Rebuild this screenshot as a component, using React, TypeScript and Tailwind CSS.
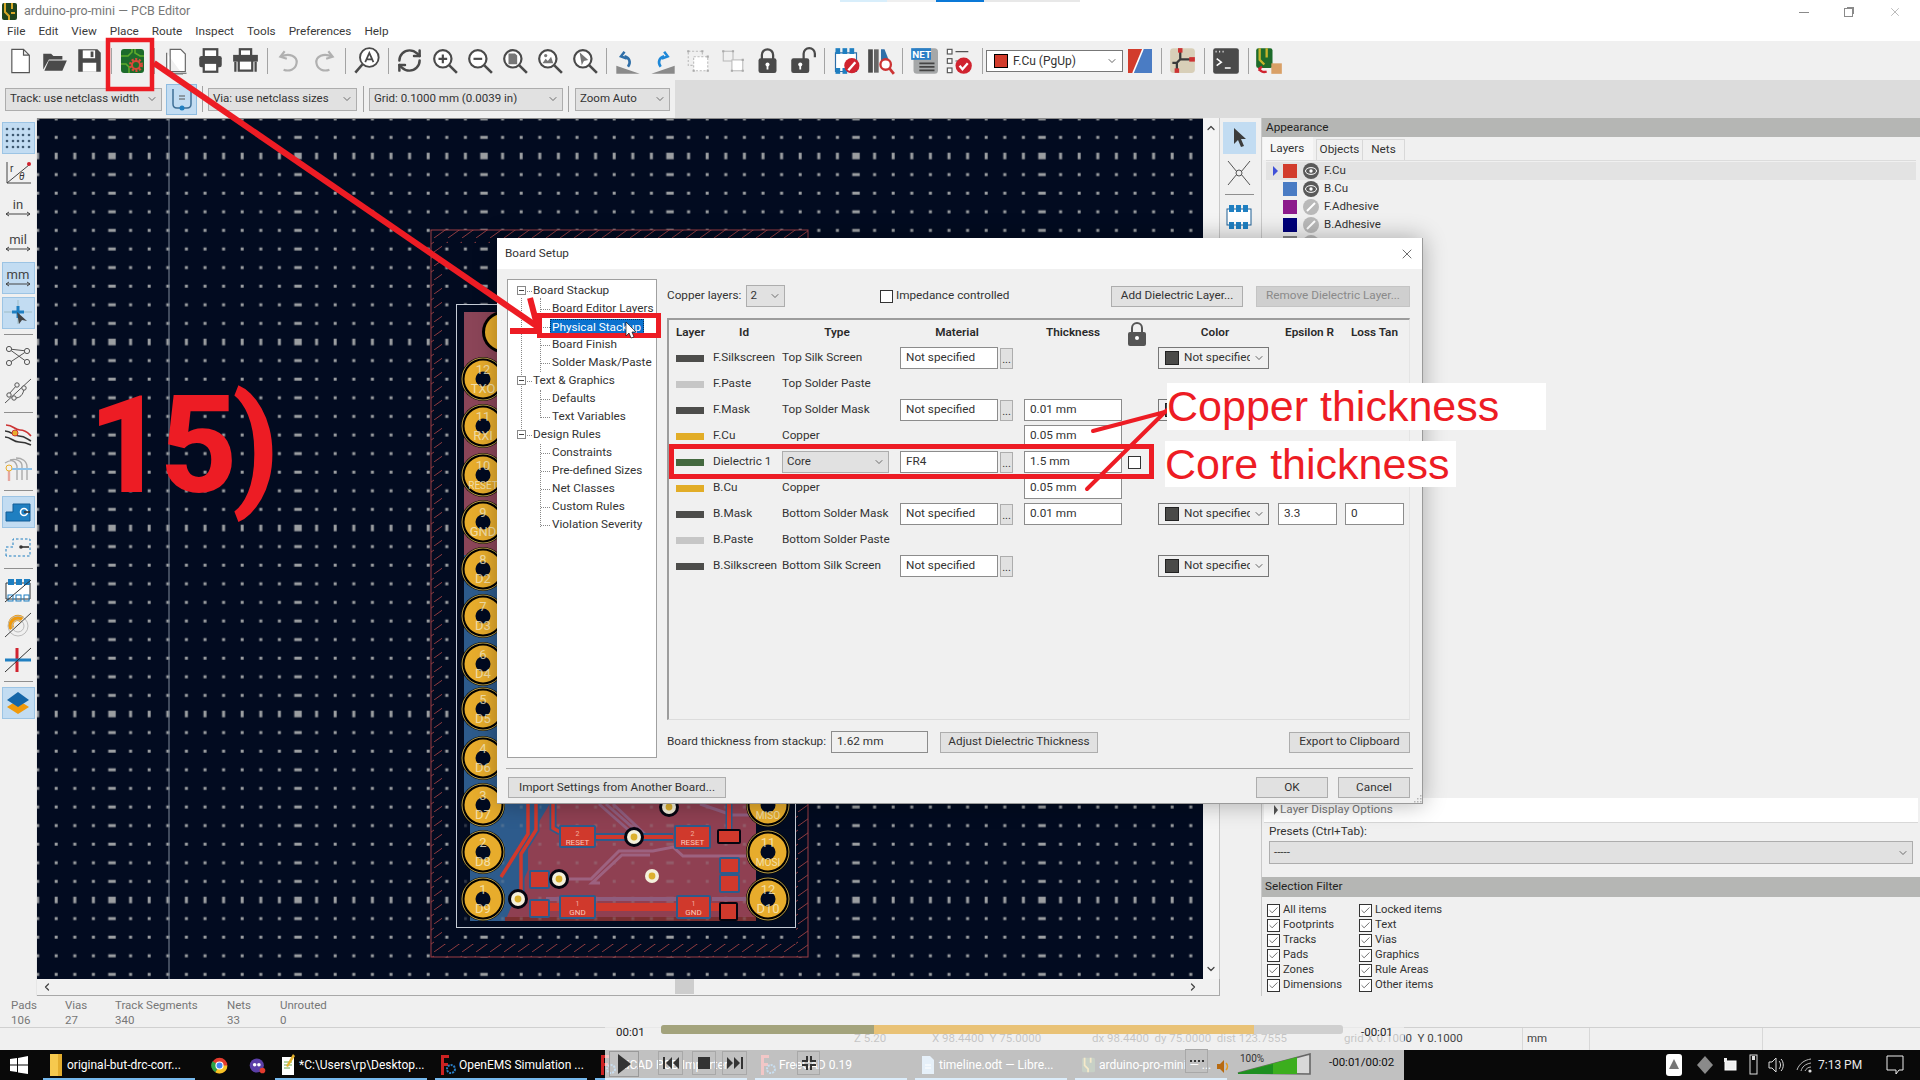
import React from "react";
import { ChevronDown, RefreshCw, X, ChevronUp, ChevronLeft, ChevronRight, Check } from "lucide-react";

const D = "#4a4a4a";
const Svg = ({ s = 24, children }: { s?: number; children: React.ReactNode }) => (
  <svg width={s} height={s} viewBox="0 0 24 24" fill="none">{children}</svg>
);

const Glass = ({ children }: { children?: React.ReactNode }) => (
  <Svg s={26}>
    <circle cx="10" cy="10" r="8" stroke={D} strokeWidth="2" fill="#fff" />
    <path d="M16 16l7 7" stroke={D} strokeWidth="2.4" />
    {children}
  </Svg>
);

const NewDoc = () => <Svg s={28}><path d="M5 2h10l5 5v15H5zM15 2v5h5" fill="#fff" stroke="#555" strokeWidth="1" /></Svg>;
const OpenIcon = () => <Svg s={27}><path d="M2 6h7l2 2h8v3H7l-5 9z" fill={D} /><path d="M7 12h16l-4 9H3z" fill={D} /></Svg>;
const SaveIcon = () => <Svg s={27}><path d="M2 2h17l3 3v17H2z" fill={D} /><rect x="6" y="3" width="11" height="7" fill="#fff" /><rect x="13" y="4" width="2.5" height="5" fill={D} /><rect x="6" y="14" width="12" height="8" fill="#fff" /></Svg>;
const SetupIcon = () => (
  <svg width="23" height="24" viewBox="0 0 23 24">
    <rect width="23" height="24" rx="3" fill="#1d6b2b" />
    <path d="M0 7h7l4-4V0M0 15h5l3 3v6M14 0v4l5 3h4" stroke="#5eaa2c" strokeWidth="1.6" fill="none" />
    <circle cx="15" cy="16" r="5.5" fill="none" stroke="#d84a3a" strokeWidth="3" strokeDasharray="2 1.5" />
    <circle cx="15" cy="16" r="4" fill="none" stroke="#d84a3a" strokeWidth="2" />
  </svg>
);
const PlotIcon = () => <Svg s={28}><path d="M7 2h9l4 4v15H7zM4 5v19h14" fill="#fff" stroke="#666" strokeWidth="1" /><path d="M4 22.5h17" stroke="#666" /></Svg>;
const PrintIcon = () => <Svg s={27}><rect x="6" y="2" width="12" height="7" fill="#fff" stroke={D} strokeWidth="2" /><rect x="2" y="8" width="20" height="10" rx="2" fill={D} /><rect x="6" y="14" width="12" height="8" fill="#fff" stroke={D} strokeWidth="2" /></Svg>;
const Plot2Icon = () => <Svg s={27}><rect x="7" y="2" width="10" height="8" fill="#fff" stroke={D} strokeWidth="2" /><rect x="1" y="7" width="22" height="6" fill={D} /><rect x="6" y="12" width="12" height="9" fill="#fff" stroke={D} strokeWidth="2" /><path d="M3 13v9M21 13v9" stroke={D} strokeWidth="2" /></Svg>;
const UndoIcon = () => <Svg s={26}><path d="M8 3L4 8l6 2M5 8c7-4 15 0 14 6-1 6-7 8-12 6" stroke="#b0b0b0" strokeWidth="2" fill="none" /></Svg>;
const RedoIcon = () => <Svg s={26}><path d="M16 3l4 5-6 2M19 8c-7-4-15 0-14 6 1 6 7 8 12 6" stroke="#b0b0b0" strokeWidth="2" fill="none" /></Svg>;
const FindIcon = () => <Svg s={28}><circle cx="14" cy="9" r="8" stroke={D} strokeWidth="1.6" fill="#fff" /><path d="M8 15l-6 7" stroke={D} strokeWidth="2.2" /><path d="M10.5 13l3.5-8 3.5 8M11.7 10.5h4.6" stroke={D} strokeWidth="1.5" /></Svg>;
const ZIn = () => <Glass><path d="M6 10h8M10 6v8" stroke={D} strokeWidth="2" /></Glass>;
const ZOut = () => <Glass><path d="M6 10h8" stroke={D} strokeWidth="2" /></Glass>;
const ZFit = () => <Glass><path d="M6 5h6l2 2v8H6z" fill="#777" /></Glass>;
const ZObj = () => <Glass><path d="M5 14l3-4 2 2 3-4 2 6z" fill="#777" /><circle cx="8" cy="7" r="1.5" fill="#777" /></Glass>;
const ZSel = () => <Glass><path d="M7 4l8 7-4 1-2 4z" fill="#777" /></Glass>;
const FlipL = () => <Svg s={28}><path d="M2 23l20-7v7z" fill="#8a8a8a" transform="matrix(-1 0 0 1 24 0)" /><path d="M12 17c3-4 1-8-3-9M9 4L6 8l5 2" stroke="#2f6fa8" strokeWidth="2.2" fill="none" /></Svg>;
const FlipR = () => <Svg s={28}><path d="M2 23l20-7v7z" fill="#8a8a8a" /><path d="M10 17c-3-4-1-8 3-9M13 4l3 4-5 2" stroke="#1e88d8" strokeWidth="2.2" fill="none" /></Svg>;
const GroupIcon = () => <Svg s={26}><rect x="3" y="3" width="13" height="13" fill="none" stroke="#bbb" strokeDasharray="2 1.5" /><rect x="8" y="8" width="13" height="13" fill="#fff" stroke="#bbb" strokeDasharray="2 1.5" /><path d="M2 2h2v2H2zM15 2h2v2h-2zM20 7h2v2h-2zM20 20h2v2h-2zM7 20h2v2H7z" fill="#aaa" /></Svg>;
const UngroupIcon = () => <Svg s={26}><rect x="3" y="3" width="9" height="9" fill="none" stroke="#bbb" /><rect x="11" y="11" width="10" height="10" fill="#fff" stroke="#bbb" /><path d="M2 2h2v2H2zM11 2h2v2h-2zM20 10h2v2h-2zM20 20h2v2h-2zM10 20h2v2h-2z" fill="#aaa" /></Svg>;
const LockIcon = () => <Svg s={27}><path d="M7 11V7a5 5 0 0110 0v4" stroke={D} strokeWidth="2" fill="none" /><rect x="4" y="10" width="16" height="13" rx="2" fill={D} /><circle cx="12" cy="15.5" r="1.8" fill="#fff" /><rect x="11.2" y="16" width="1.6" height="4" fill="#fff" /></Svg>;
const UnlockIcon = () => <Svg s={27}><path d="M13 11V6a5 5 0 0110 0v3" stroke={D} strokeWidth="2" fill="none" /><rect x="2" y="10" width="16" height="13" rx="2" fill={D} /><circle cx="10" cy="15.5" r="1.8" fill="#fff" /><rect x="9.2" y="16" width="1.6" height="4" fill="#fff" /></Svg>;
const FpEdit = () => <Svg s={28}><path d="M3 5h18v16H3z" fill="#fff" stroke="#2f6fa8" strokeWidth="1" /><rect x="3" y="1" width="4" height="5" fill="#1f7fc1" /><rect x="9" y="1" width="4" height="5" fill="#1f7fc1" /><rect x="15" y="1" width="4" height="5" fill="#1f7fc1" /><rect x="3" y="18" width="4" height="5" fill="#1f7fc1" /><rect x="9" y="18" width="4" height="5" fill="#1f7fc1" /><circle cx="17" cy="16" r="6.5" fill="#d0232f" /><path d="M14 20l6-7" stroke="#fff" strokeWidth="2" /></Svg>;
const FpBrowse = () => <Svg s={28}><rect x="1" y="2" width="4" height="20" fill={D} /><rect x="6" y="2" width="4" height="20" fill="#666" /><path d="M12 2h3l4 10h-7z" fill="#2f6fa8" /><circle cx="16" cy="15" r="4.5" fill="#fff" stroke="#c33" strokeWidth="2" /><path d="M19 18l4 5" stroke="#c33" strokeWidth="2.4" /></Svg>;
const NetIcon = () => (
  <Svg s={28}>
    <rect x="3" y="1" width="21" height="22" rx="3" fill="#a5a7a8" />
    <rect x="1" y="1" width="17" height="10" fill="#2a7fc6" />
    <text x="2" y="9.5" fontSize="8.5" fontWeight="700" fill="#fff" fontFamily="Roboto">NET</text>
    <path d="M8 14h13M8 17h13M8 20h13" stroke="#444" strokeWidth="1.5" />
  </Svg>
);
const DrcIcon = () => <Svg s={28}><rect x="2" y="2" width="4" height="4" fill="#fff" stroke="#555" /><rect x="2" y="10" width="4" height="4" fill="#fff" stroke="#555" /><rect x="2" y="18" width="4" height="4" fill="#fff" stroke="#555" /><path d="M9 4h11M9 12h3" stroke="#555" /><circle cx="16" cy="16" r="7" fill="#d0232f" /><path d="M12.5 16l2.5 3 4.5-5" stroke="#fff" strokeWidth="2" fill="none" /></Svg>;
const RouteIcon = () => <Svg s={27}><rect x="1" y="1" width="22" height="22" rx="3" fill="#d8cfb8" /><path d="M10 4v7l-3 3v7M10 11h10M7 14l-4 0" stroke="#3a3a3a" strokeWidth="2" /><rect x="8" y="1" width="4" height="4" fill="#c33" /><rect x="18" y="9" width="5" height="4" fill="#c33" /><rect x="5" y="19" width="4" height="4" fill="#c33" /></Svg>;
const TermIcon = () => <Svg s={28}><rect x="1" y="1" width="22" height="22" rx="2" fill={D} /><path d="M3 4h1M6 4h1M9 4h1" stroke="#ddd" strokeWidth="1.5" /><path d="M4 10l4 3-4 3M11 18h5" stroke="#fff" strokeWidth="1.3" fill="none" /></Svg>;
const ScriptIcon = () => <Svg s={28}><rect x="1" y="1" width="14" height="17" rx="2" fill="#1d6b2b" /><path d="M4 1v10l4 4M10 1v8" stroke="#c6b42c" strokeWidth="2" /><path d="M4 18c0 3 3 4 6 3M3 19l3-2M3 19l3 2" stroke="#d0232f" strokeWidth="2" fill="none" /><rect x="14" y="14" width="9" height="9" fill="#d9a066" /></Svg>;

const Box = ({ children }: { children?: React.ReactNode }) => (
  <div className="w-[35px] h-[32px] flex items-center justify-center shrink-0">{children}</div>
);
const Sep = () => <div className="w-px h-[26px] bg-[#a3a3a3] ml-[4px] mr-[3px] shrink-0" />;

const Combo = ({ children, className }: { children: React.ReactNode; className: string }) => (
  <div className={"flex items-center justify-between border border-[#adadad] bg-[#e1e1e1] pl-[4px] pr-[3px] text-[#333] text-[11.5px] whitespace-nowrap " + className}>
    <span>{children}</span>
    <ChevronDown size={12} strokeWidth={1.5} className="text-[#444] shrink-0" />
  </div>
);

const TitleBar = () => (
  <div className="h-[22px] bg-white flex items-center relative shrink-0">
    <svg className="ml-[2px]" width="15" height="17" viewBox="0 0 15 17"><rect width="15" height="17" rx="2" fill="#20451e" /><path d="M3 0v9l4 4v4M10 0v6M13 10H9" stroke="#d7a92a" strokeWidth="2" fill="none" /></svg>
    <span className="ml-[7px] text-[12.5px] text-[#777]">arduino-pro-mini — PCB Editor</span>
    <div className="absolute left-[840px] top-0 flex h-[2px]">
      <div className="w-[47px] bg-[#d8eefb]" />
      <div className="w-[49px] bg-[#efefef]" />
      <div className="w-[48px] bg-[#0a78d7]" />
      <div className="w-[96px] bg-[#e8e8e8]" />
    </div>
    <div className="absolute right-[18px] top-[5px] flex items-center gap-[35px] text-[#8a8a8a]">
      <div className="w-[10px] h-px bg-[#8a8a8a]" />
      <div className="w-[9px] h-[9px] border border-[#8a8a8a] shadow-[2px_-2px_0_-1px_#8a8a8a]" />
      <X size={14} strokeWidth={1} />
    </div>
  </div>
);

const MenuBar = () => (
  <div className="h-[19px] bg-white flex items-center pl-[7px] gap-[13px] text-[11.75px] text-[#3a3a3a] shrink-0">
    {["File", "Edit", "View", "Place", "Route", "Inspect", "Tools", "Preferences", "Help"].map((m) => <span key={m}>{m}</span>)}
  </div>
);

const Toolbar1 = () => (
  <div className="h-[39px] bg-[#f0f0f0] flex items-center pl-[2px] shrink-0">
    <Box><NewDoc /></Box><Box><OpenIcon /></Box><Box><SaveIcon /></Box><Sep />
    <Box><SetupIcon /></Box><Sep />
    <Box><PlotIcon /></Box><Box><PrintIcon /></Box><Box><Plot2Icon /></Box><Sep />
    <Box><UndoIcon /></Box><Box><RedoIcon /></Box><Sep />
    <Box><FindIcon /></Box><Sep />
    <Box><RefreshCw size={27} strokeWidth={2.2} color={D} /></Box><Box><ZIn /></Box><Box><ZOut /></Box><Box><ZFit /></Box><Box><ZObj /></Box><Box><ZSel /></Box><Sep />
    <Box><FlipL /></Box><Box><FlipR /></Box><Box><GroupIcon /></Box><Box><UngroupIcon /></Box><Box><LockIcon /></Box><Box><UnlockIcon /></Box><Sep />
    <Box><FpEdit /></Box><Box><FpBrowse /></Box><Sep />
    <Box><NetIcon /></Box><Box><DrcIcon /></Box>
    <div className="w-px h-[26px] bg-[#a3a3a3] ml-[6px] mr-[3px] shrink-0" />
    <div className="w-[137px] h-[22px] border border-[#777] bg-white flex items-center pl-[7px] pr-[4px] text-[12px] text-[#333] shrink-0">
      <span className="w-[14px] h-[14px] bg-[#d23c2c] border border-black mr-[5px]" />
      <span className="flex-1">F.Cu (PgUp)</span>
      <ChevronDown size={12} strokeWidth={1.5} />
    </div>
    <svg className="ml-[5px] shrink-0" width="24" height="24" viewBox="0 0 24 24"><rect width="24" height="24" fill="#4a7cc4" /><path d="M0 0h15L5 24H0z" fill="#d23c2c" /><path d="M15 0L5 24" stroke="#fff" strokeWidth="1.6" /></svg>
    <div className="w-px h-[26px] bg-[#a3a3a3] ml-[9px] mr-[3px] shrink-0" />
    <Box><RouteIcon /></Box>
    <div className="w-px h-[26px] bg-[#a3a3a3] ml-[4px] mr-[3px] shrink-0" />
    <Box><TermIcon /></Box>
    <div className="w-px h-[26px] bg-[#a3a3a3] ml-[5px] mr-[2px] shrink-0" />
    <Box><ScriptIcon /></Box>
  </div>
);

const Toolbar2 = () => (
  <div className="h-[38px] bg-[#dcdcdc] flex shrink-0">
    <div className="w-[675px] bg-[#f0f0f0] flex items-center pl-[5px]">
      <Combo className="w-[157px] h-[23px]">Track: use netclass width</Combo>
      <div className="ml-[4px] w-[31px] h-[31px] bg-[#c2dcf2] border border-[#8fbce0] flex items-center justify-center">
        <svg width="22" height="26" viewBox="0 0 22 26"><path d="M2 3v15c0 3 2 4 4 4h10c2 0 4-1 4-4V3" stroke="#3f6f96" strokeWidth="1.5" fill="none" /><path d="M8 10h6M8 13h6" stroke="#555" /><circle cx="11" cy="22" r="2.5" fill="#1f7fc1" /></svg>
      </div>
      <div className="w-px h-[26px] bg-[#a3a3a3] ml-[5px] mr-[5px]" />
      <Combo className="w-[149px] h-[23px]">Via: use netclass sizes</Combo>
      <div className="w-px h-[26px] bg-[#a3a3a3] ml-[6px] mr-[5px]" />
      <Combo className="w-[194px] h-[23px]">Grid: 0.1000 mm (0.0039 in)</Combo>
      <div className="w-px h-[26px] bg-[#a3a3a3] ml-[5px] mr-[6px]" />
      <Combo className="w-[95px] h-[23px]">Zoom Auto</Combo>
    </div>
  </div>
);

const Tool = ({ on, children }: { on?: boolean; children: React.ReactNode }) => (
  <div className="h-[35px] flex items-center justify-center">
    <div className={on ? "w-[33px] h-[32px] bg-[#c2dcf2] border border-[#9cc4e4] flex items-center justify-center" : "w-[33px] h-[32px] flex items-center justify-center"}>{children}</div>
  </div>
);
const HSep = () => <div className="h-px w-[29px] bg-[#8f8f8f] mx-auto mt-[4px] mb-[3px]" />;
const Unit = ({ t }: { t: string }) => (
  <svg width="28" height="26" viewBox="0 0 28 26"><text x="14" y="14" textAnchor="middle" fontSize="13" fill="#444" fontFamily="Roboto">{t}</text><path d="M2 19h24M2 19l3-2M2 19l3 2M26 19l-3-2M26 19l-3 2" stroke="#444" /></svg>
);

const LeftBar = () => (
  <div className="w-[37px] bg-[#f0f0f0] pt-[2px] shrink-0 border-r border-[#e6e6e6]">
    <Tool on><svg width="26" height="24" viewBox="0 0 26 24">{[3, 9, 15, 21].map((y) => [2, 8, 13, 18, 24].map((x) => <circle key={x + "-" + y} cx={x} cy={y} r="1.3" fill="#3f5a72" />))}</svg></Tool>
    <Tool><svg width="28" height="26" viewBox="0 0 28 26"><path d="M3 2v21h24M3 23L25 5" stroke="#444" fill="none" /><circle cx="25" cy="4" r="2" fill="#d0232f" /><text x="6" y="12" fontSize="10" fill="#333" fontFamily="Roboto">r</text><text x="15" y="20" fontSize="10" fontStyle="italic" fill="#333" fontFamily="Roboto">θ</text></svg></Tool>
    <Tool><Unit t="in" /></Tool>
    <Tool><Unit t="mil" /></Tool>
    <Tool on><Unit t="mm" /></Tool>
    <Tool on><svg width="28" height="26" viewBox="0 0 28 26"><path d="M0 12h28M14 0v24" stroke="#8aa" strokeWidth=".6" /><path d="M8 12h12M14 6v12" stroke="#1f7fc1" strokeWidth="3" /><path d="M13 12l2 12 3-4 5 1z" fill="#444" /></svg></Tool>
    <HSep />
    <Tool><svg width="28" height="24" viewBox="0 0 28 24"><path d="M5 5l18 13M5 19L23 7M5 5l18 2" stroke="#555" /><circle cx="5" cy="5" r="2.6" fill="#f0f0f0" stroke="#555" /><circle cx="5" cy="19" r="2.6" fill="#f0f0f0" stroke="#555" /><circle cx="23" cy="7" r="2.6" fill="#f0f0f0" stroke="#555" /><circle cx="23" cy="18" r="2.6" fill="#f0f0f0" stroke="#555" /></svg></Tool>
    <Tool><svg width="28" height="26" viewBox="0 0 28 26"><path d="M1 25L27 1" stroke="#555" /><path d="M5 16l8-9M11 20c5 0 8-3 9-9" stroke="#555" fill="none" /><circle cx="5" cy="17" r="2.2" fill="#f0f0f0" stroke="#555" /><circle cx="13" cy="7" r="2.2" fill="#f0f0f0" stroke="#555" /><circle cx="10" cy="20" r="2.2" fill="#f0f0f0" stroke="#555" /><circle cx="20" cy="10" r="2.2" fill="#f0f0f0" stroke="#555" /></svg></Tool>
    <HSep />
    <Tool><svg width="28" height="24" viewBox="0 0 28 24"><path d="M2 3c8 0 8 5 14 5s8 3 11 6" stroke="#c33" strokeWidth="1.6" fill="none" /><path d="M1 9c7 0 8 5 14 5s8 3 12 5" stroke="#333" strokeWidth="1.6" fill="none" /><path d="M1 15c6 0 8 5 14 5s8 1 12 3" stroke="#333" strokeWidth="1.6" fill="none" /><circle cx="11" cy="11" r="3" fill="#e8ad2b" stroke="#c33" /></svg></Tool>
    <Tool><svg width="28" height="24" viewBox="0 0 28 24"><path d="M1 6c6-4 10-3 12 3v14M6 3c6-2 12 1 12 6v14M12 1c6 0 11 3 11 9v13" stroke="#aaa" strokeWidth="1.4" fill="none" /><path d="M5 14v10" stroke="#e5a79f" strokeWidth="2.4" /><circle cx="5" cy="11" r="3" fill="none" stroke="#e8ad2b" /><path d="M8 12h20" stroke="#8cc0e8" strokeWidth="2" /></svg></Tool>
    <HSep />
    <Tool on><svg width="28" height="24" viewBox="0 0 28 24"><path d="M2 21V12h7V4h17v17z" fill="#1f7fc1" stroke="#135d96" /><circle cx="20" cy="12" r="3.5" fill="none" stroke="#fff" strokeWidth="1.6" /><path d="M20 12h6" stroke="#333" strokeWidth="1.6" /></svg></Tool>
    <Tool><svg width="28" height="24" viewBox="0 0 28 24"><path d="M2 21V12h7V4h17v17z" fill="none" stroke="#1f7fc1" strokeDasharray="2.5 2" /><path d="M17 12h8" stroke="#333" strokeWidth="1.6" /><circle cx="17" cy="12" r="1.8" fill="#333" /></svg></Tool>
    <HSep />
    <Tool><svg width="28" height="26" viewBox="0 0 28 26"><path d="M2 6h24v16H2z" fill="#fff" stroke="#333" /><rect x="4" y="2" width="6" height="6" fill="#1f7fc1" /><rect x="12" y="2" width="6" height="6" fill="#1f7fc1" /><rect x="20" y="2" width="6" height="6" fill="#1f7fc1" /><rect x="4" y="18" width="5" height="6" fill="none" stroke="#1f7fc1" /><rect x="12" y="18" width="5" height="6" fill="none" stroke="#1f7fc1" /><rect x="20" y="18" width="5" height="6" fill="none" stroke="#1f7fc1" /><path d="M1 25L27 3" stroke="#333" /></svg></Tool>
    <Tool><svg width="28" height="26" viewBox="0 0 28 26"><path d="M4 14a10 10 0 0116-9l-4 5a4 4 0 00-6 5l-4 3a10 10 0 01-2-4z" fill="#f09a0c" /><circle cx="14" cy="14" r="10" fill="none" stroke="#bbb" /><circle cx="14" cy="14" r="6" fill="none" stroke="#bbb" /><path d="M1 25L27 1" stroke="#444" /></svg></Tool>
    <Tool><svg width="28" height="26" viewBox="0 0 28 26"><path d="M13 1v24" stroke="#d0232f" strokeWidth="3" /><path d="M1 13h26" stroke="#1f7fc1" strokeWidth="3" /><path d="M1 25L27 1" stroke="#333" /></svg></Tool>
    <HSep />
    <Tool on><svg width="26" height="24" viewBox="0 0 26 24"><path d="M13 9L2 16l11 7 11-7z" fill="#f09a0c" /><path d="M13 1L2 9l11 7 11-7z" fill="#1566a8" /></svg></Tool>
  </div>
);

const pins: [number, string, string][] = [
  [379, "12", "TXO"], [426, "11", "RXI"], [475, "10", "RESET"], [522, "9", "GND"], [569, "8", "D2"], [616, "7", "D3"],
  [664, "6", "D4"], [709, "5", "D5"], [758, "4", "D6"], [805, "3", "D7"], [852, "2", "D8"], [899, "1", "D9"],
];
const Pad = ({ x, y, n, l }: { x: number; y: number; n: string; l: string }) => (
  <g fontFamily="Roboto" textAnchor="middle">
    <circle cx={x} cy={y} r="22" fill="#000" />
    <circle cx={x} cy={y} r="21" fill="none" stroke="#e8c65a" strokeWidth=".8" />
    <circle cx={x} cy={y} r="18.5" fill="#e7ac2c" />
    <circle cx={x} cy={y} r="7.5" fill="#010a20" />
    <text x={x} y={y - 5} fontSize="13" fill="#f6ebc5" opacity=".8">{n}</text>
    <text x={x} y={y + 14} fontSize={l.length > 3 ? 10 : 13} fill="#f6ebc5" opacity=".8">{l}</text>
  </g>
);
const Via = ({ x, y, halo = true }: { x: number; y: number; halo?: boolean }) => (
  <g>{halo && <circle cx={x} cy={y} r="10" fill="#050510" />}<circle cx={x} cy={y} r="7" fill="#f4f0dc" /><circle cx={x} cy={y} r="3.4" fill="#dcb02e" /></g>
);
const Smd = ({ x, y, w, h, t, n }: { x: number; y: number; w: number; h: number; t?: string; n?: string }) => (
  <g>
    <rect x={x - 2} y={y - 2} width={w + 4} height={h + 4} rx="2" fill="#2d5b8c" />
    <rect x={x} y={y} width={w} height={h} fill="#d0392c" />
    {t && <><text x={x + w / 2} y={y + h / 2 - 1} textAnchor="middle" fontSize="7" fill="#f0b0a0" fontFamily="Roboto">{n}</text><text x={x + w / 2} y={y + h / 2 + 8} textAnchor="middle" fontSize="8" fill="#f6c9bc" fontFamily="Roboto">{t}</text></>}
  </g>
);

const Canvas = () => (
  <div className="flex-1 relative bg-[#020b20] overflow-hidden border-t border-[#8a8a8a]">
    <svg className="absolute inset-0 w-full h-full">
      <defs>
        <pattern id="dots" patternUnits="userSpaceOnUse" x="102.7" y="146.7" width="186" height="186">
          {Array.from({ length: 10 }).map((_, i) => Array.from({ length: 10 }).map((_, j) => {
            const w = i === 0 ? 7.5 : 3;
            const h = j === 0 ? 6.5 : 3;
            return <rect key={i + "-" + j} x={9.3 + i * 18.6 - w / 2} y={9.3 + j * 18.6 - h / 2} width={w} height={h} fill="#9b9ea1" />;
          }))}
        </pattern>
        <pattern id="hatch" patternUnits="userSpaceOnUse" width="14" height="14">
          <path d="M0 14L14 4" stroke="#8d3a3e" strokeWidth="1" />
        </pattern>
      </defs>
      <g transform="translate(-37 -119)">
        <rect x="37" y="119" width="1170" height="870" fill="url(#dots)" />
        <path d="M169 119v870" stroke="#7f8a99" strokeWidth="1" />
        <rect x="431" y="230" width="377" height="13" fill="#020b20" />
        <rect x="431" y="230" width="377" height="13" fill="url(#hatch)" />
        <rect x="431" y="230" width="11" height="727" fill="#020b20" />
        <rect x="431" y="230" width="11" height="727" fill="url(#hatch)" />
        <rect x="796" y="230" width="12" height="727" fill="#020b20" />
        <rect x="796" y="230" width="12" height="727" fill="url(#hatch)" />
        <rect x="431" y="944" width="377" height="13" fill="#020b20" />
        <rect x="431" y="944" width="377" height="13" fill="url(#hatch)" />
        <rect x="431" y="230" width="377" height="727" fill="none" stroke="#9c3f44" strokeWidth="1" />
        <rect x="456.5" y="304.5" width="339" height="623" fill="#020b20" stroke="#c5ccd6" strokeWidth="1" />
        <rect x="464" y="312" width="60" height="243" fill="#8b4558" />
        <rect x="464" y="555" width="60" height="265" fill="#2d5b8c" />
        <path d="M464 800H790V921H464z" fill="#020b20" />
        <path d="M470 800H560V830L528 870V921H470z" fill="#2d5b8c" />
        <path d="M552 800H756V921H505L528 870V840z" fill="#8f4052" />
        <rect x="505" y="917" width="251" height="4" fill="#7a2f30" />
        <rect x="464" y="800" width="292" height="121" fill="url(#dots)" opacity=".3" />
        <path d="M528 804V834L501 877M536 804V830L521 854V900M553 804V828L560 832" stroke="#2d5b8c" strokeWidth="7" fill="none" />
        <path d="M528 804V834L501 877M536 804V830L521 854V900M553 804V828L560 832" stroke="#d0392c" strokeWidth="3.5" fill="none" />
        <path d="M599 804L633 834M606 804L640 834M613 804L648 837M700 804L732 815M730 815H760" stroke="#8f5d7e" strokeWidth="3" fill="none" />
        <path d="M568 879H591L619 851H653L673 847L683 856H746M600 883H592L622 855H650" stroke="#9d6280" strokeWidth="3" fill="none" />
        <path d="M546 899H676M712 899H746" stroke="#8f5d7e" strokeWidth="4" fill="none" />
        <path d="M596 837H673" stroke="#2d5b8c" strokeWidth="8" />
        <path d="M596 837H673" stroke="#d0392c" strokeWidth="4" />
        <path d="M729 804V832" stroke="#2d5b8c" strokeWidth="7" />
        <path d="M729 804V832" stroke="#d0392c" strokeWidth="4" />
        <rect x="546" y="903" width="183" height="8" fill="#d0392c" />
        <Smd x={561} y={827} w={33} h={19} t="RESET" n="2" />
        <Smd x={676} y={827} w={33} h={20} t="RESET" n="2" />
        <Smd x={561} y={897} w={33} h={20} t="GND" n="1" />
        <Smd x={678} y={897} w={31} h={20} t="GND" n="1" />
        <rect x="717" y="829" width="24" height="15" rx="2" fill="#050510" />
        <rect x="719" y="831" width="20" height="11" fill="#d0392c" />
        <rect x="726" y="870" width="7" height="8" fill="#d0392c" />
        <Smd x={721} y={859} w={17} h={13} />
        <Smd x={721} y={876} w={17} h={15} />
        <rect x="719" y="902" width="19" height="19" rx="2" fill="#050510" />
        <rect x="721" y="904" width="15" height="15" fill="#d0392c" />
        <Smd x={531} y={872} w={17} h={15} />
        <Smd x={531} y={901} w={17} h={15} />
        <Via x={634} y={837} />
        <Via x={652} y={876} halo={false} />
        <Via x={559} y={879} />
        <Via x={518} y={899} />
        <Via x={669} y={807} />
        <circle cx="503" cy="332" r="21" fill="#000" /><circle cx="503" cy="332" r="18" fill="#e7ac2c" />
        {pins.map(([y, n, l]) => <Pad key={n} x={483} y={y} n={n} l={l} />)}
        <Pad x={768} y={805} n="" l="MISO" />
        <Pad x={768} y={852} n="11" l="MOSI" />
        <Pad x={768} y={899} n="12" l="D10" />
      </g>
    </svg>
  </div>
);

const CenterColumn = () => (
  <div className="w-[1183px] flex flex-col shrink-0">
    <div className="flex-1 flex min-h-0">
      <Canvas />
      <div className="w-[17px] bg-[#f4f4f4] flex flex-col items-center justify-between py-[4px] border-r border-[#c8c8c8]">
        <ChevronUp size={12} strokeWidth={2.5} className="text-[#444]" />
        <ChevronDown size={12} strokeWidth={2.5} className="text-[#444]" />
      </div>
    </div>
    <div className="h-[17px] bg-[#f1f1f1] border-b border-r border-[#a8a8a8] flex items-center justify-between px-[4px] relative shrink-0">
      <ChevronLeft size={12} strokeWidth={2.5} className="text-[#444]" />
      <div className="absolute left-[638px] top-0 w-[19px] h-[15px] bg-[#cdcdcd]" />
      <ChevronRight size={12} strokeWidth={2.5} className="text-[#444] mr-[16px]" />
    </div>
  </div>
);

const RightTools = () => (
  <div className="w-[38px] bg-[#f0f0f0] flex flex-col items-center pt-[4px] shrink-0">
    <div className="w-[33px] h-[32px] bg-[#c2dcf2] flex items-center justify-center"><svg width="16" height="22" viewBox="0 0 16 22"><path d="M3 1v16l4-4 3 7 3-1-3-7h5z" fill="#3c3c3c" /></svg></div>
    <svg className="mt-[5px]" width="26" height="28" viewBox="0 0 26 28"><path d="M2 2l9 11M24 2l-9 11M2 26l9-11M24 26l-9-11" stroke="#555" /><circle cx="13" cy="14" r="3" fill="none" stroke="#555" /></svg>
    <div className="h-px w-[29px] bg-[#8f8f8f] mt-[7px]" />
    <svg className="mt-[9px]" width="26" height="26" viewBox="0 0 26 26"><rect x="1" y="5" width="24" height="16" fill="#fff" stroke="#1c5e94" /><g fill="#1f7fc1"><rect x="3" y="1" width="5" height="7" /><rect x="10" y="1" width="5" height="7" /><rect x="17" y="1" width="5" height="7" /><rect x="3" y="18" width="5" height="7" /><rect x="10" y="18" width="5" height="7" /><rect x="17" y="18" width="5" height="7" /></g></svg>
  </div>
);

const layers: [string, string, boolean, boolean][] = [
  ["F.Cu", "#d23c2c", true, true],
  ["B.Cu", "#4a7cc4", true, false],
  ["F.Adhesive", "#8c1a8c", false, false],
  ["B.Adhesive", "#00007a", false, false],
  ["F.Paste", "#888888", false, false],
];
const Eye = ({ on }: { on: boolean }) => on ? (
  <svg width="16" height="16" viewBox="0 0 16 16"><circle cx="8" cy="8" r="8" fill="#5a5a5a" /><ellipse cx="8" cy="8" rx="5.5" ry="3.4" fill="none" stroke="#fff" /><circle cx="8" cy="8" r="1.7" fill="#fff" /></svg>
) : (
  <svg width="16" height="16" viewBox="0 0 16 16"><circle cx="8" cy="8" r="8" fill="#b9b9b9" /><path d="M4 12l8-8" stroke="#fff" strokeWidth="2" /></svg>
);
const Cb = ({ label }: { label: string }) => (
  <div className="flex items-center h-[15px]">
    <span className="w-[13px] h-[13px] border border-[#333] bg-white flex items-center justify-center shrink-0"><Check size={11} strokeWidth={1.4} color="#222" /></span>
    <span className="ml-[3px] text-[11.25px] text-[#333]">{label}</span>
  </div>
);

const Appearance = () => (
  <div className="flex-1 ml-[3px] flex flex-col bg-[#f0f0f0] border-l border-[#c9c9c9]">
    <div className="h-[19px] bg-[#b5b6b4] pl-[4px] flex items-center text-[11.75px] text-[#222]">Appearance</div>
    <div className="h-[23px] flex items-end pl-[1px] text-[11.75px] text-[#333]">
      <div className="w-[50px] h-[23px] bg-[#f7f7f7] pl-[7px] flex items-center">Layers</div>
      <div className="w-[47px] h-[21px] ml-[3px] border border-[#d8d8d8] border-b-0 flex items-center justify-center">Objects</div>
      <div className="w-[42px] h-[21px] border border-[#d8d8d8] border-b-0 border-l-0 flex items-center justify-center">Nets</div>
    </div>
    <div className="h-[638px] mx-[4px] border-t border-[#dcdcdc] pt-[1px]">
      {layers.map(([n, c, on, sel]) => (
        <div key={n} className={sel ? "h-[18px] bg-[#e3e3e3] flex items-center relative pl-[17px] text-[11.5px] text-[#333]" : "h-[18px] flex items-center relative pl-[17px] text-[11.5px] text-[#333]"}>
          {sel && <span className="absolute left-[7px] top-[4px] w-0 h-0 border-y-[5px] border-y-transparent border-l-[5px] border-l-[#3f50d8]" />}
          <span className="w-[14px] h-[14px] mr-[6px]" style={{ background: c }} />
          <Eye on={on} />
          <span className="ml-[5px]">{n}</span>
        </div>
      ))}
    </div>
    <div className="h-[25px] bg-white mx-[2px] border-b border-[#d8d8d8] flex items-center pl-[10px] text-[11.75px] text-[#777]">
      <span className="w-0 h-0 border-y-[5px] border-y-transparent border-l-[4px] border-l-[#555] mr-[2px]" />Layer Display Options
    </div>
    <div className="h-[18px] pl-[7px] flex items-center text-[11.75px] text-[#333]">Presets (Ctrl+Tab):</div>
    <Combo className="h-[23px] mx-[7px] w-[644px] pl-[4px] pr-[3px]">-----</Combo>
    <div className="h-[13px]" />
    <div className="h-[20px] bg-[#b5b6b4] pl-[3px] flex items-center text-[11.75px] text-[#222]">Selection Filter</div>
    <div className="grid grid-cols-[92px_1fr] pl-[5px] pt-[6px]">
      {[["All items", "Locked items"], ["Footprints", "Text"], ["Tracks", "Vias"], ["Pads", "Graphics"], ["Zones", "Rule Areas"], ["Dimensions", "Other items"]].flat().map((l) => <Cb key={l} label={l} />)}
    </div>
  </div>
);

const Status = () => (
  <div className="h-[54px] bg-[#f0f0f0] flex flex-col shrink-0">
    <div className="h-[31px] flex pl-[11px] pt-[2px] text-[11.5px] leading-[15px] text-[#777]">
      <div className="w-[54px]"><div>Pads</div><div>106</div></div>
      <div className="w-[50px]"><div>Vias</div><div>27</div></div>
      <div className="w-[112px]"><div>Track Segments</div><div>340</div></div>
      <div className="w-[53px]"><div>Nets</div><div>33</div></div>
      <div><div>Unrouted</div><div>0</div></div>
    </div>
    <div className="flex-1 border-t border-[#d0d0d0] flex items-center relative text-[11.5px] text-[#444]">
      <span className="absolute left-[854px]">Z 5.20</span>
      <span className="absolute left-[932px]">X 98.4400&nbsp; Y 75.0000</span>
      <span className="absolute left-[1092px]">dx 98.4400&nbsp; dy 75.0000&nbsp; dist 123.7555</span>
      <span className="absolute left-[1344px]">grid X 0.1000&nbsp; Y 0.1000</span>
      <span className="absolute left-[1527px]">mm</span>
      <div className="absolute left-[1522px] top-0 h-full w-px bg-[#d8d8d8]" />
      <div className="absolute left-[1589px] top-0 h-full w-px bg-[#d8d8d8]" />
      <div className="absolute left-[1762px] top-0 h-full w-px bg-[#d8d8d8]" />
    </div>
  </div>
);

const Folder = () => <svg width="14" height="24" viewBox="0 0 14 24"><path d="M1 1h12v22H1z" fill="#f6c94e" /><path d="M9 1h4v22H9z" fill="#e3ad2e" /></svg>;
const FLogo = () => <svg width="16" height="22" viewBox="0 0 16 22"><path d="M1 1h8v3H4v5h4v3H4v9H1z" fill="#cc2222" /><circle cx="11" cy="15" r="4" fill="none" stroke="#2a7fc6" strokeWidth="2" strokeDasharray="2 1" /></svg>;

const Task = ({ icon, text }: { icon: React.ReactNode; text: string }) => (
  <div className="w-[152px] mr-[8px] h-full relative flex items-center pl-[5px] text-white text-[12px] whitespace-nowrap overflow-hidden shrink-0">
    <span className="w-[16px] flex justify-center mr-[3px]">{icon}</span>
    {text}
    <div className="absolute left-0 right-0 bottom-0 h-[2px] bg-[#76b9ed]" />
  </div>
);

const Taskbar = () => (
  <div className="h-[30px] bg-[#090909] flex items-center relative shrink-0 overflow-hidden">
    <svg className="ml-[10px] mr-[15px] shrink-0" width="18" height="18" viewBox="0 0 18 18"><path d="M0 3l7-1v6.5H0zM8 2l10-2v8.5H8zM0 9.5h7V16l-7-1zM8 9.5h10V18L8 16.5z" fill="#fff" /></svg>
    <Task icon={<Folder />} text="original-but-drc-corr..." />
    <div className="w-[40px] flex justify-center shrink-0 -ml-[4px]"><svg width="17" height="17" viewBox="0 0 24 24"><circle cx="12" cy="12" r="11" fill="#e33b2e" /><path d="M12 12L23 12A11 11 0 0 1 6 21.5z" fill="#f7c325" /><path d="M12 12L6 21.5A11 11 0 0 1 2 6z" fill="#2ba245" /><circle cx="12" cy="12" r="5" fill="#4285f4" stroke="#fff" strokeWidth="1.6" /></svg></div>
    <div className="w-[36px] flex justify-center shrink-0"><svg width="17" height="17" viewBox="0 0 24 24"><circle cx="11" cy="12" r="10" fill="#5b3fa8" /><circle cx="8" cy="11" r="2.5" fill="#fff" /><circle cx="14" cy="11" r="2.5" fill="#fff" /><circle cx="19" cy="19" r="4" fill="#e33b2e" /></svg></div>
    <Task icon={<svg width="14" height="22" viewBox="0 0 14 22"><rect x="1" y="3" width="12" height="18" fill="#fff" /><path d="M3 8h8M3 11h8M3 14h6" stroke="#6aa84f" /><path d="M12 0l2 2-7 11-2-1z" fill="#e5b330" /></svg>} text={"*C:\\Users\\rp\\Desktop..."} />
    <Task icon={<FLogo />} text="OpenEMS Simulation ..." />
    <Task icon={<FLogo />} text="KiCAD PCB Importer" />
    <Task icon={<FLogo />} text="FreeCAD 0.19" />
    <Task icon={<svg width="14" height="18" viewBox="0 0 14 18"><path d="M1 0h8l4 4v14H1z" fill="#9cc4e8" /><path d="M4 9h6M4 12h6" stroke="#fff" /></svg>} text="timeline.odt — Libre..." />
    <Task icon={<svg width="13" height="18" viewBox="0 0 15 17"><rect width="15" height="17" rx="2" fill="#20451e" /><path d="M3 0v9l4 4v4M10 0v6" stroke="#d7a92a" strokeWidth="2" fill="none" /></svg>} text="arduino-pro-mini — ..." />
    <div className="absolute right-0 top-0 h-full w-[260px] bg-[#090909] flex items-center pl-[6px] text-[#e8e8e8]">
      <svg width="16" height="22" viewBox="0 0 16 22"><rect width="16" height="22" rx="3" fill="#fff" /><path d="M8 5l5 10H3z" fill="#777" /></svg>
      <svg className="ml-[15px]" width="16" height="22" viewBox="0 0 16 22"><path d="M8 2l8 9-8 9-8-9z" fill="#8a8a8a" /></svg>
      <svg className="ml-[10px]" width="16" height="16" viewBox="0 0 16 16"><rect x="2" y="4" width="11" height="9" fill="#eee" stroke="#fff" /><path d="M1 1h3v4H1z" fill="#eee" /></svg>
      <svg className="ml-[10px]" width="10" height="22" viewBox="0 0 10 22"><rect x="1" y="1" width="7" height="19" fill="none" stroke="#ddd" /><rect x="3" y="2" width="3" height="4" fill="#ddd" /></svg>
      <svg className="ml-[9px]" width="16" height="18" viewBox="0 0 16 18"><path d="M1 6h3l4-4v14l-4-4H1zM11 5c2 2 2 6 0 8M13 3c3 3 3 9 0 12" stroke="#ddd" fill="none" /></svg>
      <svg className="ml-[12px]" width="16" height="16" viewBox="0 0 16 16"><path d="M1 13C3 7 8 3 15 2M5 14c1-4 4-7 10-8M9 14c1-2 3-4 6-4" stroke="#bbb" fill="none" /><circle cx="14" cy="14" r="1.6" fill="#ddd" /></svg>
      <span className="ml-[6px] text-[12px] w-[54px]">7:13 PM</span>
      <svg className="ml-[14px]" width="18" height="20" viewBox="0 0 18 20"><path d="M1 1h16v14h-4l-3 4v-4H1z" fill="none" stroke="#eee" /></svg>
    </div>
  </div>
);

const Player = () => (
  <div className="absolute left-[605px] top-[1027px] w-[799px] h-[53px]">
    <div className="h-[23px] relative text-[11.5px] text-[#222] bg-[#f0f0f0]/75">
      <span className="absolute left-[11px] top-[-3px]">00:01</span>
      <div className="absolute left-[56px] top-[-2px] w-[682px] h-[9px] rounded-[3px] bg-[#cfcfcf] flex overflow-hidden">
        <div className="w-[213px] bg-[#a3a37c]" />
        <div className="w-[380px] bg-[#e9c276]" />
      </div>
      <span className="absolute left-[756px] top-[-3px]">-00:01</span>
    </div>
    <div className="h-[30px] relative bg-white/75">
      <div className="absolute left-[4px] top-[1px] w-[30px] h-[26px] border border-[#999] flex items-center justify-center"><div className="w-0 h-0 border-y-[10px] border-y-transparent border-l-[13px] border-l-[#333]" /></div>
      <div className="absolute left-[53px] top-[1px] w-[25px] h-[24px] border border-[#a8a8a8] flex items-center justify-center text-[#333]">
        <svg width="16" height="12" viewBox="0 0 16 12"><path d="M0 0h2v12H0zM9 0v12L3 6zM16 0v12L10 6z" fill="#333" /></svg>
      </div>
      <div className="absolute left-[87px] top-[1px] w-[24px] h-[24px] border border-[#a8a8a8] flex items-center justify-center"><div className="w-[12px] h-[12px] bg-[#333]" /></div>
      <div className="absolute left-[117px] top-[1px] w-[25px] h-[24px] border border-[#a8a8a8] flex items-center justify-center">
        <svg width="16" height="12" viewBox="0 0 16 12"><path d="M16 0h-2v12h2zM7 0v12l6-6zM0 0v12l6-6z" fill="#333" /></svg>
      </div>
      <div className="absolute left-[192px] top-[1px] w-[23px] h-[24px] border border-[#a8a8a8] flex items-center justify-center">
        <svg width="14" height="14" viewBox="0 0 14 14"><path d="M5 0v5H0M9 0v5h5M5 14V9H0M9 14V9h5" stroke="#333" strokeWidth="2" fill="none" /></svg>
      </div>
      <div className="absolute left-[580px] top-[-1px] w-[23px] h-[24px] border border-[#a8a8a8] flex items-center justify-center"><div className="w-[14px] border-t-2 border-dotted border-[#333]" /></div>
      <svg className="absolute left-[612px] top-[9px]" width="14" height="15" viewBox="0 0 14 15"><path d="M0 5h3l4-4v13l-4-4H0z" fill="#b86a10" /><path d="M9 4c2 2 2 5 0 7" stroke="#e59a20" strokeWidth="1.5" fill="none" /></svg>
      <svg className="absolute left-[632px] top-[3px]" width="74" height="22" viewBox="0 0 74 22"><path d="M1 20L73 1v20z" fill="#d8d8d8" stroke="#666" strokeWidth="1.6" /><path d="M1 20L60 4v17H1z" fill="#3cae1e" /><path d="M1 20L36 11v10H1z" fill="#1d8f20" /></svg>
      <span className="absolute left-[635px] top-[1px] text-[10px] text-[#333]">100%</span>
      <span className="absolute left-[724px] top-[4px] text-[11.5px] text-[#111]">-00:01/00:02</span>
    </div>
  </div>
);

const Field = ({ v, cls = "w-[98px]" }: { v: string; cls?: string }) => (
  <div className={"h-[22px] bg-white border border-[#8c8c8c] flex items-center pl-[5px] text-[11.75px] text-[#333] " + cls}>{v}</div>
);
const Dots = () => <div className="ml-[2px] w-[13px] h-[21px] bg-[#e1e1e1] border border-[#adadad] flex items-end justify-center text-[11px] leading-[16px] text-[#333]">...</div>;
const ColorCombo = () => (
  <div className="w-[111px] h-[22px] bg-[#f0f0f0] border border-[#777] flex items-center pl-[6px] pr-[3px] text-[11.75px] text-[#333]">
    <span className="w-[14px] h-[14px] bg-[#4a4a48] border border-[#222] shrink-0" />
    <span className="ml-[5px] w-[66px] overflow-hidden whitespace-nowrap">Not specified</span>
    <ChevronDown size={12} strokeWidth={1.5} className="ml-auto shrink-0" />
  </div>
);
const Btn = ({ children, className, off }: { children: React.ReactNode; className: string; off?: boolean }) => (
  <div className={(off ? "bg-[#cfcfcf] border-[#c4c4c4] text-[#8a8a8a] " : "bg-[#e1e1e1] border-[#adadad] text-[#333] ") + "border h-[21px] flex items-center justify-center text-[11.75px] whitespace-nowrap shrink-0 " + className}>{children}</div>
);

type Row = { sw: string; id: string; type?: string; core?: boolean; mat?: string; th?: string; lock?: boolean; color?: boolean; eps?: string; loss?: string };
const rows: Row[] = [
  { sw: "#4d4d4b", id: "F.Silkscreen", type: "Top Silk Screen", mat: "Not specified", color: true },
  { sw: "#c6c6c6", id: "F.Paste", type: "Top Solder Paste" },
  { sw: "#4d4d4b", id: "F.Mask", type: "Top Solder Mask", mat: "Not specified", th: "0.01 mm", color: true },
  { sw: "#e2ad27", id: "F.Cu", type: "Copper", th: "0.05 mm" },
  { sw: "#44693f", id: "Dielectric 1", core: true, mat: "FR4", th: "1.5 mm", lock: true },
  { sw: "#e2ad27", id: "B.Cu", type: "Copper", th: "0.05 mm" },
  { sw: "#4d4d4b", id: "B.Mask", type: "Bottom Solder Mask", mat: "Not specified", th: "0.01 mm", color: true, eps: "3.3", loss: "0" },
  { sw: "#c6c6c6", id: "B.Paste", type: "Bottom Solder Paste" },
  { sw: "#4d4d4b", id: "B.Silkscreen", type: "Bottom Silk Screen", mat: "Not specified", color: true },
];

const tree: [number, string, boolean?][] = [
  [0, "Board Stackup"], [1, "Board Editor Layers"], [1, "Physical Stackup", true], [1, "Board Finish"], [1, "Solder Mask/Paste"],
  [0, "Text & Graphics"], [1, "Defaults"], [1, "Text Variables"],
  [0, "Design Rules"], [1, "Constraints"], [1, "Pre-defined Sizes"], [1, "Net Classes"], [1, "Custom Rules"], [1, "Violation Severity"],
];

const Tree = () => (
  <div className="w-[150px] h-[479px] bg-white border border-[#a0a0a0] pt-[2px] relative shrink-0 text-[11.75px] text-[#333]">
    <div className="absolute left-[13px] top-[18px] h-[137px] border-l border-dotted border-[#888]" />
    <div className="absolute left-[32px] top-[18px] h-[74px] border-l border-dotted border-[#888]" />
    <div className="absolute left-[32px] top-[110px] h-[28px] border-l border-dotted border-[#888]" />
    <div className="absolute left-[32px] top-[164px] h-[83px] border-l border-dotted border-[#888]" />
    {tree.map(([lv, t, sel]) => lv === 0 ? (
      <div key={t} className="h-[18px] flex items-center relative pl-[25px]">
        <span className="absolute left-[9px] top-[4px] w-[9px] h-[9px] border border-[#888] bg-white flex items-center justify-center"><span className="w-[5px] h-px bg-[#444]" /></span>
        <span className="absolute left-[19px] w-[5px] border-t border-dotted border-[#888]" />
        {t}
      </div>
    ) : (
      <div key={t} className="h-[18px] flex items-center relative pl-[44px]">
        <span className="absolute left-[33px] w-[9px] border-t border-dotted border-[#888]" />
        {sel ? <span className="bg-[#0a72cf] text-white border border-dotted border-[#0b2c52] pl-[1px] pr-[2px] -ml-[2px] leading-[15px]">{t}</span> : t}
      </div>
    ))}
  </div>
);

const Dialog = () => (
  <div className="absolute left-[497px] top-[238px] w-[926px] h-[566px] bg-[#f0f0f0] border-r border-b border-[#9a9a9a] shadow-[0_0_22px_rgba(0,0,0,0.3)] text-[11.75px] text-[#333]">
    <div className="h-[31px] bg-white flex items-center justify-between pl-[8px] pr-[7px]">
      <span>Board Setup</span>
      <X size={16} strokeWidth={1} className="text-[#222]" />
    </div>
    <div className="flex pl-[10px] pt-[10px]">
      <Tree />
      <div className="w-[743px] ml-[10px] pt-[6px]">
        <div className="flex items-center h-[22px]">
          <span className="w-[80px]">Copper layers:</span>
          <Combo className="w-[40px] h-[22px]">2</Combo>
          <span className="ml-[95px] w-[13px] h-[13px] border border-[#333] bg-white shrink-0" />
          <span className="ml-[3px] whitespace-nowrap w-[112px]">Impedance controlled</span>
          <Btn className="w-[132px] ml-[103px]">Add Dielectric Layer...</Btn>
          <Btn className="w-[154px] ml-[13px]" off>Remove Dielectric Layer...</Btn>
        </div>
        <div className="mt-[11px] h-[402px] border-t-2 border-l-2 border-[#9c9c9c] border-b border-b-[#dcdcdc] pl-[7px] border-r border-r-[#e4e4e4]">
          <div className="grid grid-cols-[37px_69px_118px_98px_26px_98px_36px_120px_67px_59px] h-[25px] items-center font-semibold text-[#2a2a2a] whitespace-nowrap">
            <span>Layer</span>
            <span className="pl-[26px]">Id</span>
            <span className="text-center pr-[8px]">Type</span>
            <span className="text-center pl-[16px]">Material</span>
            <span />
            <span className="text-center">Thickness</span>
            <span className="pl-[6px] pt-[2px]"><svg width="18" height="24" viewBox="0 0 18 24"><path d="M4 10V6a5 5 0 0110 0v4" stroke="#555" strokeWidth="2" fill="none" /><rect x="0" y="10" width="18" height="14" rx="2" fill="#555" /><circle cx="9" cy="16" r="2" fill="#fff" /></svg></span>
            <span className="text-center pr-[6px]">Color</span>
            <span className="text-center pr-[4px]">Epsilon R</span>
            <span className="text-center">Loss Tan</span>
          </div>
          {rows.map((r) => (
            <div key={r.id} className="grid grid-cols-[37px_69px_118px_98px_26px_98px_36px_120px_67px_59px] h-[26px] items-center whitespace-nowrap">
              <span className="w-[28px] h-[7px]" style={{ background: r.sw }} />
              <span>{r.id}</span>
              {r.core ? <Combo className="w-[107px] h-[22px]">Core</Combo> : <span>{r.type}</span>}
              {r.mat ? <Field v={r.mat} /> : <span />}
              {r.mat ? <Dots /> : <span />}
              {r.th ? <Field v={r.th} /> : <span />}
              {r.lock ? <span className="ml-[6px] w-[13px] h-[13px] bg-white border border-[#333]" /> : <span />}
              {r.color ? <ColorCombo /> : <span />}
              {r.eps ? <Field v={r.eps} cls="w-[59px]" /> : <span />}
              {r.loss ? <Field v={r.loss} cls="w-[59px]" /> : <span />}
            </div>
          ))}
        </div>
        <div className="mt-[11px] h-[22px] flex items-center">
          <span className="w-[164px] whitespace-nowrap">Board thickness from stackup:</span>
          <div className="w-[97px] h-[22px] border border-[#8c8c8c] flex items-center pl-[5px]">1.62 mm</div>
          <Btn className="w-[158px] ml-[12px]">Adjust Dielectric Thickness</Btn>
          <Btn className="w-[121px] ml-auto">Export to Clipboard</Btn>
        </div>
      </div>
    </div>
    <div className="mt-[10px] mx-[9px] h-px bg-[#a8a8a8]" />
    <div className="mt-[8px] mx-[11px] flex">
      <Btn className="w-[218px]">Import Settings from Another Board...</Btn>
      <Btn className="w-[72px] ml-auto">OK</Btn>
      <Btn className="w-[72px] ml-[10px] mr-[1px]">Cancel</Btn>
    </div>
    <svg className="absolute right-0 bottom-0" width="9" height="9" viewBox="0 0 9 9"><g fill="#b5b5b5"><rect x="7" y="1" width="1.5" height="1.5" /><rect x="4" y="4" width="1.5" height="1.5" /><rect x="7" y="4" width="1.5" height="1.5" /><rect x="1" y="7" width="1.5" height="1.5" /><rect x="4" y="7" width="1.5" height="1.5" /><rect x="7" y="7" width="1.5" height="1.5" /></g></svg>
  </div>
);

const Annotations = () => (
  <>
    <svg className="absolute inset-0 pointer-events-none" width="1920" height="1080" fill="none" stroke="#ed1c24">
      <rect x="108" y="40" width="44" height="49" strokeWidth="4.5" />
      <path d="M154 63L538 327" strokeWidth="6" />
      <path d="M530 298L537 325" strokeWidth="6" />
      <path d="M510 331H537" strokeWidth="6" />
      <rect x="539.5" y="315.5" width="119" height="20" strokeWidth="5" />
      <rect x="671.5" y="446.5" width="480" height="30" strokeWidth="5" />
      <path d="M1093 431L1165 412" strokeWidth="4" strokeLinecap="round" />
      <path d="M1087 489L1167 410" strokeWidth="4" strokeLinecap="round" />
      <path d="M626 322v14l3-3 2 5 3-1-2-5h4z" fill="#fff" stroke="#111" strokeWidth=".7" />
    </svg>
    <div className="absolute left-[88px] top-[371px] text-[135px] leading-[150px] tracking-[-6px] font-extrabold text-[#ed1c24] [font-family:Roboto,sans-serif] pointer-events-none">15)</div>
    <div className="absolute left-[1167px] top-[383px] w-[379px] h-[47px] bg-white flex items-center text-[43px] text-[#ed1c24] [font-family:'Liberation_Sans',Arial,sans-serif]">Copper thickness</div>
    <div className="absolute left-[1165px] top-[441px] w-[291px] h-[46px] bg-white flex items-center text-[43px] text-[#ed1c24] [font-family:'Liberation_Sans',Arial,sans-serif]">Core thickness</div>
  </>
);

export default function App() {
  return (
    <div className="w-[1920px] h-[1080px] relative overflow-hidden bg-[#f0f0f0] flex flex-col [font-family:Roboto,'Liberation_Sans',sans-serif]">
      <TitleBar />
      <MenuBar />
      <Toolbar1 />
      <Toolbar2 />
      <div className="h-[878px] flex shrink-0">
        <LeftBar />
        <CenterColumn />
        <RightTools />
        <Appearance />
      </div>
      <Status />
      <Taskbar />
      <Player />
      <Dialog />
      <Annotations />
    </div>
  );
}
